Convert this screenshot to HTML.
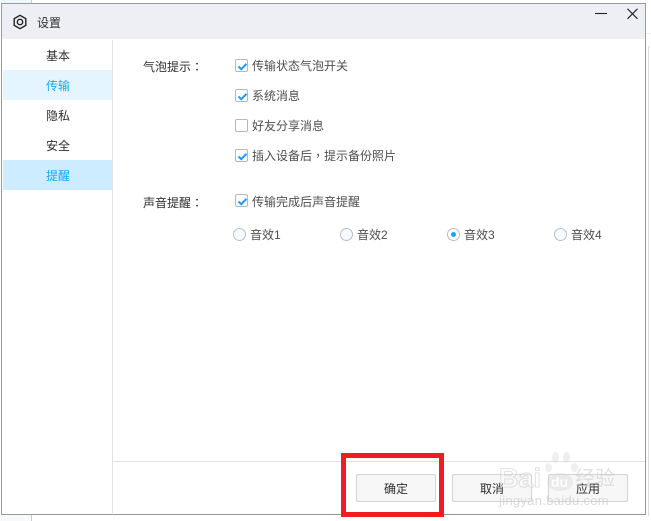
<!DOCTYPE html>
<html><head><meta charset="utf-8">
<style>
html,body{margin:0;padding:0;width:651px;height:521px;overflow:hidden;background:#fff;font-family:"Liberation Sans","Noto Sans CJK SC",sans-serif;font-size:12px;color:#2e2e2e}
div,svg{position:absolute;box-sizing:border-box}
.t{white-space:nowrap;line-height:16px;height:16px}
.g{color:#4f4f4f}
.p{font-family:"Noto Sans CJK TC",sans-serif}
.cb{width:13px;height:13px;border:1px solid #b5b8c0;border-radius:2px;background:#fff}
.cb svg{left:1px;top:1px}
.r{width:13px;height:13px;border:1px solid #b9bdc8;border-radius:50%;background:#f7faff}
.btn{width:80px;height:28px;top:474px;border:1px solid #d4d4d4;border-radius:2px;background:#f7f7f7;text-align:center;line-height:29px;color:#2e2e2e}
.w{background:rgba(215,215,215,.4);border-radius:50%}
</style></head><body>
<div style="left:0;top:0;width:31px;height:3px;background:#eef7fd"></div>
<div style="left:31px;top:0;width:1px;height:3px;background:#ccc"></div>
<div style="left:31px;top:515px;width:1px;height:6px;background:#ccc"></div>
<div style="left:0;top:515px;width:31px;height:6px;background:#f8f9fc"></div>
<div style="left:646px;top:33px;width:5px;height:1px;background:#eee"></div>
<div style="left:648px;top:46px;width:1px;height:470px;background:#ddd"></div>

<div style="left:1px;top:3px;width:645px;height:512px;border:1px solid #999;background:#fff"></div>
<div style="left:2px;top:4px;width:643px;height:35px;background:#eeeff4"></div>

<svg style="left:12px;top:14px" width="16" height="16" viewBox="0 0 16 16" fill="none" stroke="#222" stroke-width="1.400"><path d="M8 1.300l5.800 3.300v6.800L8 14.700l-5.800-3.300V4.600z" stroke-linejoin="round"/><circle cx="8" cy="8" r="2.700"/></svg>
<div class="t" style="left:37px;top:15px">设置</div>
<svg style="left:594px;top:8px" width="50" height="12" viewBox="0 0 50 12" fill="none" stroke="#222" stroke-width="1.100"><path d="M1 5.500h12"/><path d="M33.500 .8l10 10M43.500 .8l-10 10"/></svg>

<div style="left:112px;top:40px;width:1px;height:473px;background:#e2e2e2"></div>
<div style="left:3px;top:70px;width:109px;height:30px;background:#e5f5ff"></div>
<div style="left:3px;top:160px;width:109px;height:30px;background:#cdecff"></div>
<div class="t" style="left:46px;top:48px">基本</div>
<div class="t" style="left:46px;top:78px;color:#1aa7f5">传输</div>
<div class="t" style="left:46px;top:108px">隐私</div>
<div class="t" style="left:46px;top:138px">安全</div>
<div class="t" style="left:46px;top:168px;color:#1aa7f5">提醒</div>

<div class="t" style="left:143px;top:59px">气泡提示<span class="p">：</span></div>
<div class="t" style="left:143px;top:195px">声音提醒<span class="p">：</span></div>

<div class="cb" style="left:235px;top:59px"><svg width="11" height="11" viewBox="0 0 11 11" fill="none" stroke="#1e9bf0" stroke-width="2"><path d="M1.500 5.500l2.800 2.700 5.200-5.400"/></svg></div>
<div class="t g" style="left:252px;top:58px">传输状态气泡开关</div>
<div class="cb" style="left:235px;top:89px"><svg width="11" height="11" viewBox="0 0 11 11" fill="none" stroke="#1e9bf0" stroke-width="2"><path d="M1.500 5.500l2.800 2.700 5.200-5.400"/></svg></div>
<div class="t g" style="left:252px;top:88px">系统消息</div>
<div class="cb" style="left:235px;top:119px"></div>
<div class="t g" style="left:252px;top:118px">好友分享消息</div>
<div class="cb" style="left:235px;top:149px"><svg width="11" height="11" viewBox="0 0 11 11" fill="none" stroke="#1e9bf0" stroke-width="2"><path d="M1.500 5.500l2.800 2.700 5.200-5.400"/></svg></div>
<div class="t g" style="left:252px;top:148px">插入设备后<span class="p">，</span>提示备份照片</div>
<div class="cb" style="left:235px;top:194px"><svg width="11" height="11" viewBox="0 0 11 11" fill="none" stroke="#1e9bf0" stroke-width="2"><path d="M1.500 5.500l2.800 2.700 5.200-5.400"/></svg></div>
<div class="t g" style="left:252px;top:194px">传输完成后声音提醒</div>

<div class="r" style="left:233px;top:228px"></div>
<div class="t g" style="left:250px;top:227px">音效1</div>
<div class="r" style="left:340px;top:228px"></div>
<div class="t g" style="left:357px;top:227px">音效2</div>
<div class="r" style="left:447px;top:228px;background:#fff"><div style="left:3px;top:3px;width:5px;height:5px;border-radius:50%;background:#12a5f8"></div></div>
<div class="t g" style="left:464px;top:227px">音效3</div>
<div class="r" style="left:554px;top:228px"></div>
<div class="t g" style="left:571px;top:227px">音效4</div>

<div style="left:113px;top:461px;width:532px;height:1px;background:#e2e2e2"></div>
<div class="btn" style="left:356px">确定</div>
<div class="btn" style="left:452px">取消</div>
<div class="btn" style="left:548px">应用</div>

<div class="t" style="left:499px;top:464px;font-size:27px;line-height:28px;height:28px;font-weight:bold;color:rgba(255,255,255,.35);-webkit-text-stroke:1px rgba(200,200,200,.55)">Bai</div>
<div class="w" style="left:547px;top:473px;width:26px;height:18px"></div>
<div class="w" style="left:545px;top:463px;width:7px;height:9px"></div>
<div class="w" style="left:552px;top:452px;width:7px;height:11px"></div>
<div class="w" style="left:563px;top:452px;width:7px;height:11px"></div>
<div class="w" style="left:571px;top:463px;width:7px;height:9px"></div>
<div class="t" style="left:551px;top:474px;font-size:14px;font-weight:bold;color:rgba(255,255,255,.9)">du</div>
<div class="t" style="left:575px;top:468px;font-size:20px;line-height:22px;height:22px;color:rgba(205,205,205,.6)">经验</div>
<div class="t" style="left:499px;top:493px;font-size:13px;color:rgba(205,205,205,.75);letter-spacing:.3px">jingyan.baidu.com</div>

<div style="left:341px;top:453px;width:103px;height:64px;border:5px solid #ee1c25"></div>
</body></html>
